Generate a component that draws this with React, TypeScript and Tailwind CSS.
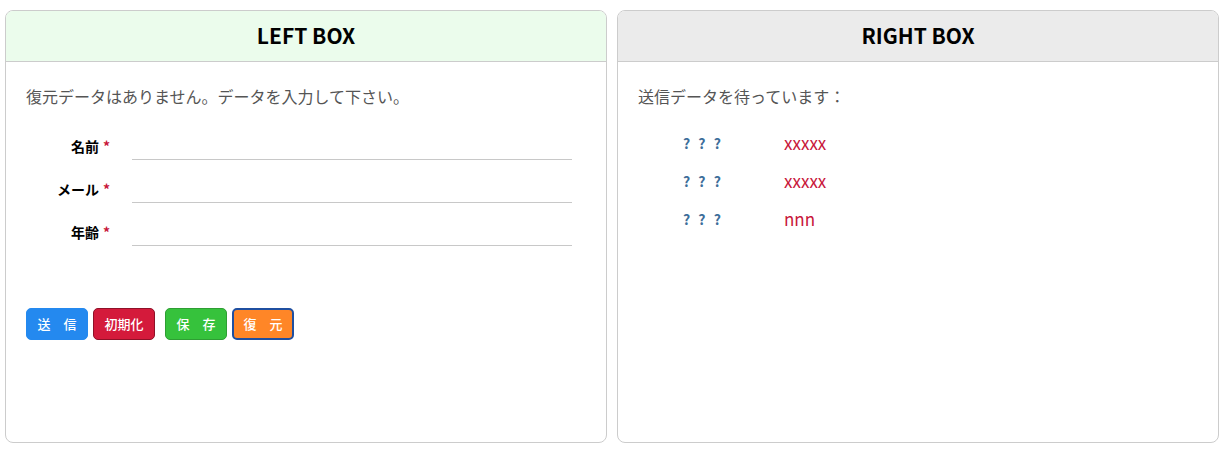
import React from 'react';

const font = { fontFamily: '"Noto Sans CJK JP", "Noto Sans", sans-serif' };

function Box({ title, headerClass, children }: { title: string; headerClass: string; children: React.ReactNode }) {
  return (
    <div className="flex h-[433px] w-[602px] flex-col overflow-hidden rounded-[8px] border border-[#cccccc] bg-white">
      <div className={`flex h-[51px] shrink-0 items-center justify-center border-b border-[#cccccc] ${headerClass}`}>
        <span className="text-[21px] font-bold text-black">{title}</span>
      </div>
      <div className="flex-1 px-5 pt-[22px]">{children}</div>
    </div>
  );
}

function Field({ label }: { label: string }) {
  return (
    <div className="flex h-[30px] items-center">
      <label className="w-[84px] pt-[2px] text-right text-[14px] font-bold text-black">
        {label}
        <span className="ml-[4px] text-[#c8163a]">*</span>
      </label>
      <input type="text" className="ml-[22px] h-[30px] w-[440px] border-b border-[#c8c8c8] outline-none" />
    </div>
  );
}

function Btn({ label, cls }: { label: string; cls: string }) {
  return (
    <button
      type="button"
      className={`flex h-[32px] w-[62px] items-center justify-center rounded-[5px] border text-[13px] font-medium text-white ${cls}`}
    >
      {label}
    </button>
  );
}

export default function App() {
  return (
    <div className="flex gap-[10px] bg-white pl-[5px] pt-[10px]" style={font}>
      <Box title="LEFT BOX" headerClass="bg-[#ebfcec]">
        <p className="text-[16px] leading-6 text-[#555555]">復元データはありません。データを入力して下さい。</p>
        <div className="mt-[22px] flex flex-col gap-[13px]">
          <Field label="名前" />
          <Field label="メール" />
          <Field label="年齢" />
        </div>
        <div className="mt-[62px] flex">
          <div className="flex gap-[5px]">
            <Btn label="送　信" cls="border-[#2489ef] bg-[#2489ef]" />
            <Btn label="初期化" cls="border-[#8f1128] bg-[#d41a3b]" />
          </div>
          <div className="ml-[10px] flex gap-[5px]">
            <Btn label="保　存" cls="border-[#2e9e33] bg-[#36c23c]" />
            <Btn label="復　元" cls="border-2 border-[#1f4fa0] bg-[#ff8627]" />
          </div>
        </div>
      </Box>
      <Box title="RIGHT BOX" headerClass="bg-[#ebebeb]">
        <p className="text-[16px] leading-6 text-[#555555]">送信データを待っています：</p>
        <div className="ml-[45px] mt-[23px] flex flex-col gap-[14px]">
          {['xxxxx', 'xxxxx', 'nnn'].map((v, i) => (
            <div key={i} className="flex h-[24px] items-center">
              <span className="w-[101px] text-[14px] font-bold tracking-[2.5px] text-[#3d6e9a]">? ? ?</span>
              <span className="text-[17px] text-[#c8163a]">{v}</span>
            </div>
          ))}
        </div>
      </Box>
    </div>
  );
}
